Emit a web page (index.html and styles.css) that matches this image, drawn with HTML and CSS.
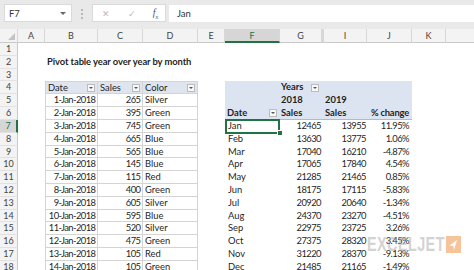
FILE: index.html
```html
<!DOCTYPE html>
<html>
<head>
<meta charset="utf-8">
<link rel="stylesheet" href="styles.css">
</head>
<body>
<div class="app">
  <div class="fbar">
    <div class="namebox"><span>F7</span><span class="nb-arrow"></span></div>
    <div class="grip"></div>
    <div class="fbtns"><span class="fx-x">✕</span><span class="fx-ok">✓</span><span class="fx-fn"><i>f</i><sub>x</sub></span></div>
    <div class="finput">Jan</div>
  </div>
  <div class="sheet">
    <div class="row hdr">
      <div class="ch corner"></div>
      <div class="ch">A</div><div class="ch">B</div><div class="ch">C</div><div class="ch">D</div><div class="ch">E</div>
      <div class="ch chsel">F</div><div class="ch">G</div><div class="ch chh"></div><div class="ch">I</div><div class="ch">J</div><div class="ch">K</div><div class="ch chl"></div>
    </div>
    <div class="row"><div class="rh">1</div></div>
    <div class="row"><div class="rh">2</div><div class="c B title">Pivot table year over year by month</div></div>
    <div class="row"><div class="rh">3</div></div>
    <div class="row">
      <div class="rh">4</div>
      <div class="c B t th tl flt"><span>Date</span><span class="fb"></span></div>
      <div class="c C t th flt"><span>Sales</span><span class="fb"></span></div>
      <div class="c D t th flt"><span>Color</span><span class="fb"></span></div>
      <div class="c F pv"></div>
      <div class="c G pv flt b"><span>Years</span><span class="fb"></span></div>
      <div class="c H pv"></div><div class="c I pv"></div><div class="c J pv"></div>
    </div>
    <div class="row">
      <div class="rh">5</div>
      <div class="c B t tl r">1-Jan-2018</div><div class="c C t r">265</div><div class="c D t">Silver</div>
      <div class="c F pv"></div><div class="c G pv b">2018</div><div class="c H pv"></div><div class="c I pv b">2019</div><div class="c J pv"></div>
    </div>
    <div class="row">
      <div class="rh">6</div>
      <div class="c B t tl r">2-Jan-2018</div><div class="c C t r">395</div><div class="c D t">Green</div>
      <div class="c F pv pvb flt b"><span>Date</span><span class="fb"></span></div><div class="c G pv pvb b">Sales</div><div class="c H pv pvb"></div><div class="c I pv pvb b">Sales</div><div class="c J pv pvb b r">% change</div>
    </div>
    <div class="row">
      <div class="rh rhsel">7</div>
      <div class="c B t tl r">3-Jan-2018</div><div class="c C t r">745</div><div class="c D t">Green</div>
      <div class="c F m sel">Jan</div><div class="c G r">12465</div><div class="c I r">13955</div><div class="c J r">11.95%</div>
    </div>
    <div class="row">
      <div class="rh">8</div>
      <div class="c B t tl r">4-Jan-2018</div><div class="c C t r">665</div><div class="c D t">Blue</div>
      <div class="c F m">Feb</div><div class="c G r">13630</div><div class="c I r">13775</div><div class="c J r">1.06%</div>
    </div>
    <div class="row">
      <div class="rh">9</div>
      <div class="c B t tl r">5-Jan-2018</div><div class="c C t r">565</div><div class="c D t">Blue</div>
      <div class="c F m">Mar</div><div class="c G r">17040</div><div class="c I r">16210</div><div class="c J r">-4.87%</div>
    </div>
    <div class="row">
      <div class="rh">10</div>
      <div class="c B t tl r">6-Jan-2018</div><div class="c C t r">145</div><div class="c D t">Blue</div>
      <div class="c F m">Apr</div><div class="c G r">17065</div><div class="c I r">17840</div><div class="c J r">4.54%</div>
    </div>
    <div class="row">
      <div class="rh">11</div>
      <div class="c B t tl r">7-Jan-2018</div><div class="c C t r">115</div><div class="c D t">Red</div>
      <div class="c F m">May</div><div class="c G r">21285</div><div class="c I r">21465</div><div class="c J r">0.85%</div>
    </div>
    <div class="row">
      <div class="rh">12</div>
      <div class="c B t tl r">8-Jan-2018</div><div class="c C t r">400</div><div class="c D t">Green</div>
      <div class="c F m">Jun</div><div class="c G r">18175</div><div class="c I r">17115</div><div class="c J r">-5.83%</div>
    </div>
    <div class="row">
      <div class="rh">13</div>
      <div class="c B t tl r">9-Jan-2018</div><div class="c C t r">605</div><div class="c D t">Silver</div>
      <div class="c F m">Jul</div><div class="c G r">20920</div><div class="c I r">20640</div><div class="c J r">-1.34%</div>
    </div>
    <div class="row">
      <div class="rh">14</div>
      <div class="c B t tl r">10-Jan-2018</div><div class="c C t r">595</div><div class="c D t">Blue</div>
      <div class="c F m">Aug</div><div class="c G r">24370</div><div class="c I r">23270</div><div class="c J r">-4.51%</div>
    </div>
    <div class="row">
      <div class="rh">15</div>
      <div class="c B t tl r">11-Jan-2018</div><div class="c C t r">520</div><div class="c D t">Silver</div>
      <div class="c F m">Sep</div><div class="c G r">22975</div><div class="c I r">23725</div><div class="c J r">3.26%</div>
    </div>
    <div class="row">
      <div class="rh">16</div>
      <div class="c B t tl r">12-Jan-2018</div><div class="c C t r">475</div><div class="c D t">Green</div>
      <div class="c F m">Oct</div><div class="c G r">27375</div><div class="c I r">28320</div><div class="c J r">3.45%</div>
    </div>
    <div class="row">
      <div class="rh">17</div>
      <div class="c B t tl r">13-Jan-2018</div><div class="c C t r">105</div><div class="c D t">Red</div>
      <div class="c F m">Nov</div><div class="c G r">31220</div><div class="c I r">28370</div><div class="c J r">-9.13%</div>
    </div>
    <div class="row">
      <div class="rh">18</div>
      <div class="c B t tl r">14-Jan-2018</div><div class="c C t r">105</div><div class="c D t">Green</div>
      <div class="c F m">Dec</div><div class="c G r">21485</div><div class="c I r">21165</div><div class="c J r">-1.49%</div>
    </div>
  </div>
  <div class="watermark">
    <span class="wm-text">EXCELJET</span>
    <span class="wm-box"><svg width="15" height="17" viewBox="0 0 15 17"><path d="M11 4 L3.5 9.5 L7.5 10 L8 14 Z" fill="#fff"/></svg></span>
  </div>
</div>
</body>
</html>
```

FILE: styles.css
```css
html, body {
  margin: 0;
  padding: 0;
  background: #fff;
}
body {
  font-family: Lato, "Open Sans", "Noto Sans", sans-serif;
  color: #222;
}
.app {
  width: 474px;
  height: 270px;
  overflow: hidden;
  position: relative;
  background: #fff;
}

/* formula bar */
.fbar {
  height: 29px;
  box-sizing: border-box;
  background: #e9e9e9;
  display: flex;
  align-items: flex-start;
  padding-top: 4px;
}
.namebox {
  margin-left: 4px;
  width: 68px;
  height: 18px;
  box-sizing: border-box;
  background: #fff;
  border: 1px solid #dadada;
  display: flex;
  align-items: center;
  justify-content: space-between;
  padding: 0 5px 0 4px;
  font-size: 9.5px;
  color: #333;
}
.nb-arrow {
  width: 0;
  height: 0;
  border-left: 3px solid transparent;
  border-right: 3px solid transparent;
  border-top: 3px solid #666;
}
.grip {
  margin: 5px 0 0 9px;
  width: 0;
  height: 10px;
  border-left: 2px dotted #b8b8b8;
}
.fbtns {
  margin-left: 9px;
  width: 74px;
  height: 18px;
  box-sizing: border-box;
  background: #fff;
  border: 1px solid #dadada;
  display: grid;
  grid-template-columns: 26px 25px 23px;
  align-items: center;
  justify-items: center;
  font-size: 9px;
}
.fx-x, .fx-ok {
  color: #b9b9b9;
}
.fx-fn {
  font-family: "Liberation Serif", serif;
  font-size: 10px;
  color: #555;
}
.fx-fn sub {
  font-size: 6px;
  font-style: italic;
}
.finput {
  margin-left: 3px;
  margin-top: 1px;
  flex: 1;
  height: 17px;
  background: #fff;
  padding-left: 8px;
  font-size: 9.5px;
  line-height: 17px;
  color: #333;
}

/* grid */
.row {
  display: grid;
  grid-template-columns: 18px 27px 53px 45px 55px 27px 55px 42px 2px 43px 45px 34px 1fr;
  grid-template-rows: 100%;
  height: 12.82px;
}
.row.hdr {
  height: 14px;
}
.ch {
  background: #f3f3f3;
  border-right: 1px solid #d7d7d7;
  border-bottom: 1px solid #c9c9c9;
  box-sizing: border-box;
  font-size: 9px;
  line-height: 13px;
  text-align: center;
  color: #444;
}
.corner {
  position: relative;
}
.corner::after {
  content: "";
  position: absolute;
  right: 2px;
  bottom: 2px;
  width: 0;
  height: 0;
  border-left: 7px solid transparent;
  border-bottom: 7px solid #c3c3c3;
}
.chsel {
  background: #d6d6d6;
  border-bottom: 2px solid #217346;
  color: #217346;
}
.chh {
  background: #f3f3f3;
  border-left: 1px solid #d7d7d7;
}
.chl {
  border-right: none;
}
.rh {
  grid-column: 1;
  background: #f3f3f3;
  border-right: 1px solid #c9c9c9;
  border-bottom: 1px solid #e2e2e2;
  box-sizing: border-box;
  font-size: 9px;
  line-height: 12px;
  text-align: center;
  color: #444;
}
.rhsel {
  background: #d6d6d6;
  border-right: 2px solid #217346;
  color: #217346;
}

.c {
  grid-row: 1;
  font-size: 9.4px;
  line-height: 12.8px;
  white-space: nowrap;
  overflow: visible;
  box-sizing: border-box;
  padding: 0 2px;
  color: #1f1f1f;
}
.B { grid-column: 3; }
.C { grid-column: 4; }
.D { grid-column: 5; }
.F { grid-column: 7; }
.G { grid-column: 8; }
.H { grid-column: 9; }
.I { grid-column: 10; }
.J { grid-column: 11; }

.title {
  grid-column: 3 / span 6;
  font-weight: 700;
  letter-spacing: -0.08px;
}
.r {
  text-align: right;
  letter-spacing: -0.55px;
}
.b {
  font-weight: 700;
}

/* excel table */
.t {
  border-right: 1px solid #d4d4d4;
  border-bottom: 1px solid #d4d4d4;
  line-height: 12px;
  padding: 0 1px 0 2px;
}
.t.r {
  padding-right: 1.5px;
}
.tl {
  border-left: 1px solid #d4d4d4;
}
.th {
  background: #dfe5ee;
  border-top: 1px solid #d4d4d4;
  line-height: 11px;
}
.flt {
  display: flex;
  align-items: center;
  justify-content: space-between;
}
.fb {
  width: 8px;
  height: 8px;
  box-sizing: border-box;
  margin-right: 1px;
  background: #f8f8f8;
  border: 1px solid #bcbcbc;
  position: relative;
}
.fb::after {
  content: "";
  position: absolute;
  left: 1px;
  top: 2px;
  width: 0;
  height: 0;
  border-left: 2px solid transparent;
  border-right: 2px solid transparent;
  border-top: 2px solid #555;
}

/* pivot */
.pv {
  background: #dce4f1;
}
.pvb {
  border-bottom: 1px solid #a7bbdd;
  line-height: 12px;
}
.G.pv, .I.pv {
  padding-left: 1px;
}
.J.pv.r {
  letter-spacing: -0.2px;
}
.F.pv.flt {
  padding-right: 2px;
}
.m {
  padding-left: 3px;
}
.G.r, .I.r {
  padding-right: 1px;
}
.J.r {
  padding-right: 3px;
}
.sel {
  position: relative;
}
.sel::after {
  content: "";
  position: absolute;
  left: 0;
  top: -1px;
  right: 0;
  bottom: -1px;
  border: 2px solid #217346;
}
.sel::before {
  content: "";
  position: absolute;
  right: -3px;
  bottom: -3px;
  width: 4px;
  height: 4px;
  background: #217346;
  border: 1px solid #fff;
  z-index: 2;
}

/* watermark */
.watermark {
  position: absolute;
  left: 367px;
  top: 235px;
  display: flex;
  align-items: center;
  gap: 2px;
  opacity: 0.5;
}
.wm-text {
  display: inline-block;
  width: 77px;
  font-family: "Liberation Sans", Arial, sans-serif;
  font-weight: 700;
  font-size: 20px;
  line-height: 18px;
  color: #a8a8a8;
  transform: scaleX(0.72);
  transform-origin: left center;
  letter-spacing: 0.6px;
}
.wm-box {
  display: flex;
  width: 15px;
  height: 17px;
  background: #ee8a3a;
}
```
